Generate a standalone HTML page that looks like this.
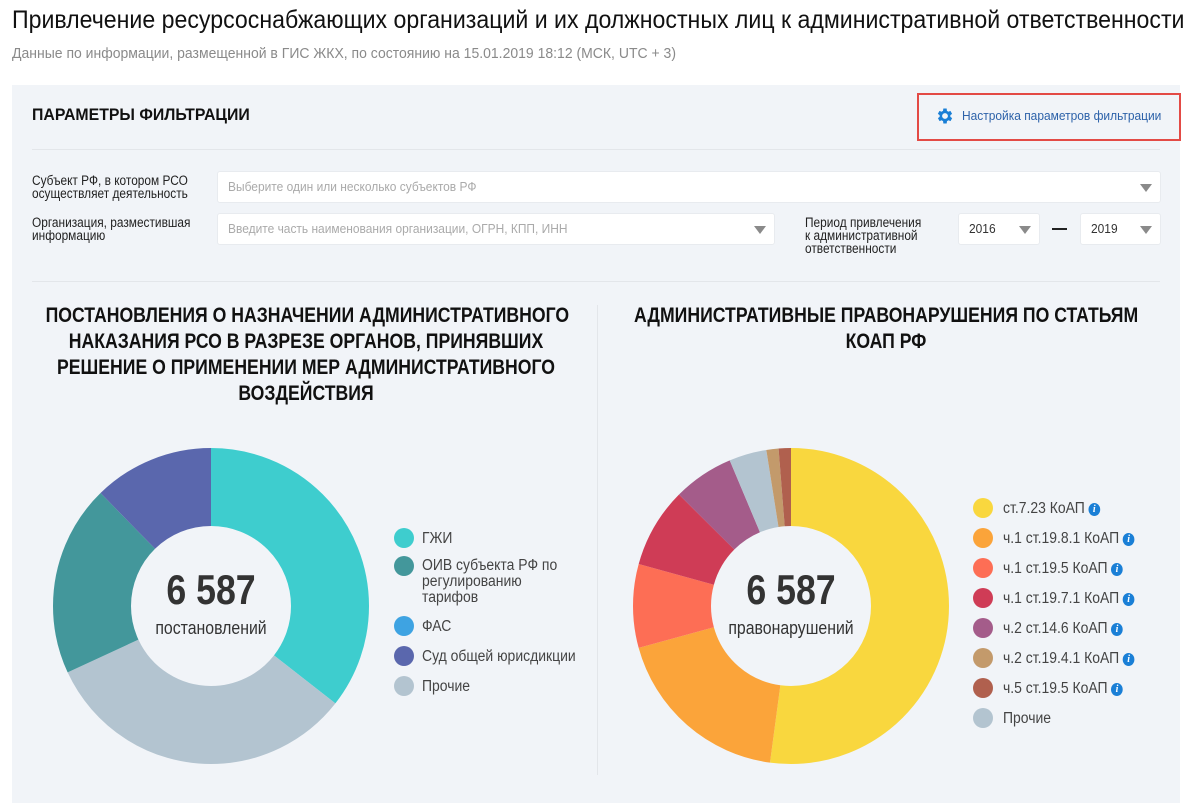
<!DOCTYPE html>
<html><head><meta charset="utf-8"><style>
*{margin:0;padding:0;box-sizing:border-box}
body{width:1189px;height:803px;background:#fff;font-family:"Liberation Sans","Noto Sans CJK SC",sans-serif;color:#222;position:relative;overflow:hidden}
.a{position:absolute;white-space:nowrap;transform-origin:0 0}
.panel{position:absolute;left:12px;top:85px;width:1168px;height:718px;background:#f1f4f8}
.inp{position:absolute;background:#fff;border-radius:3px;border:1px solid #e8ebef;font-size:13px;color:#aaa;padding-left:10px;line-height:30px}
.inp span{display:inline-block;transform:scaleX(.92);transform-origin:0 0}
.arr{position:absolute;right:8px;top:12px;width:0;height:0;border-left:6px solid transparent;border-right:6px solid transparent;border-top:8px solid #8a8a8a}
.lbl{font-size:13.5px;line-height:13px;color:#222;transform:scaleX(.88)}
.h{font-weight:bold;font-size:21px;line-height:26px;text-align:center;color:#111;transform:scaleX(.84);transform-origin:50% 0}
.lg{font-size:15.5px;color:#444;line-height:16px;transform:scaleX(.9)}
.dot{position:absolute;width:20px;height:20px;border-radius:50%}
.i{display:inline-block;width:13px;height:13px;border-radius:50%;background:#1a7fd6;color:#fff;font:italic bold 11px/13px "Liberation Serif",serif;text-align:center;vertical-align:1px;margin-left:4px}
</style></head><body>
<div class="a" style="left:12px;top:6px;font-size:25px;color:#111;transform:scaleX(.925)">Привлечение ресурсоснабжающих организаций и их должностных лиц к административной ответственности</div>
<div class="a" style="left:12px;top:46px;font-size:14.5px;color:#8a8a8a;transform:scaleX(.965)">Данные по информации, размещенной в ГИС ЖКХ, по состоянию на 15.01.2019 18:12 (МСК, UTC + 3)</div>
<div class="panel"></div>
<div class="a" style="left:32px;top:106px;font-size:16.5px;font-weight:bold;color:#111;transform:scaleX(.96)">ПАРАМЕТРЫ ФИЛЬТРАЦИИ</div>
<div class="a" style="left:917px;top:93px;width:264px;height:48px;border:2px solid #e34a45"></div>
<svg class="a" style="left:935px;top:106px" width="20" height="20" viewBox="0 0 24 24"><path fill="#1a7fd6" d="M19.4 13a7.5 7.5 0 000-2l2.1-1.6-2-3.5-2.5 1a7 7 0 00-1.7-1L15 3h-4l-.4 2.9a7 7 0 00-1.7 1l-2.5-1-2 3.5L6.6 11a7.5 7.5 0 000 2l-2.1 1.6 2 3.5 2.5-1a7 7 0 001.7 1L11 21h4l.4-2.9a7 7 0 001.7-1l2.5 1 2-3.5zM13 15.5a3.5 3.5 0 110-7 3.5 3.5 0 010 7z" transform="translate(-1 0)"/></svg>
<div class="a" style="left:962px;top:108px;font-size:13px;color:#2d62a9;transform:scaleX(.92)">Настройка параметров фильтрации</div>
<div class="a" style="left:32px;top:149px;width:1128px;height:1px;background:#e3e6ea"></div>
<div class="a lbl" style="left:32px;top:174px">Субъект РФ, в котором РСО<br>осуществляет деятельность</div>
<div class="inp" style="left:217px;top:171px;width:944px;height:32px"><span>Выберите один или несколько субъектов РФ</span><div class="arr"></div></div>
<div class="a lbl" style="left:32px;top:216px">Организация, разместившая<br>информацию</div>
<div class="inp" style="left:217px;top:213px;width:558px;height:32px"><span>Введите часть наименования организации, ОГРН, КПП, ИНН</span><div class="arr"></div></div>
<div class="a lbl" style="left:805px;top:216px">Период привлечения<br>к административной<br>ответственности</div>
<div class="inp" style="left:958px;top:213px;width:82px;height:32px;color:#333"><span>2016</span><div class="arr"></div></div>
<div class="a" style="left:1052px;top:228px;width:15px;height:1.5px;background:#222"></div>
<div class="inp" style="left:1080px;top:213px;width:81px;height:32px;color:#333"><span>2019</span><div class="arr"></div></div>
<div class="a" style="left:32px;top:281px;width:1128px;height:1px;background:#e3e6ea"></div>
<div class="a" style="left:597px;top:305px;width:1px;height:470px;background:#e3e6ea"></div>
<div class="a h" style="left:-4px;top:303px;width:620px">ПОСТАНОВЛЕНИЯ О НАЗНАЧЕНИИ АДМИНИСТРАТИВНОГО<br>НАКАЗАНИЯ РСО В РАЗРЕЗЕ ОРГАНОВ, ПРИНЯВШИХ<br>РЕШЕНИЕ О ПРИМЕНЕНИИ МЕР АДМИНИСТРАТИВНОГО<br>ВОЗДЕЙСТВИЯ</div>
<div class="a h" style="left:586px;top:303px;width:600px">АДМИНИСТРАТИВНЫЕ ПРАВОНАРУШЕНИЯ ПО СТАТЬЯМ<br>КОАП РФ</div>
<svg class="a" style="left:0;top:0" width="1189" height="803">
<g transform="translate(211 606) rotate(-90)" fill="none" stroke-width="78">
<circle r="119" stroke="#3ecdce" stroke-dasharray="265.9 800" stroke-dashoffset="0"/>
<circle r="119" stroke="#b3c4d0" stroke-dasharray="243 800" stroke-dashoffset="-265.9"/>
<circle r="119" stroke="#43979b" stroke-dasharray="146.4 800" stroke-dashoffset="-508.9"/>
<circle r="119" stroke="#5a67ad" stroke-dasharray="92.4 800" stroke-dashoffset="-655.3"/>
</g>
<g transform="translate(791 606) rotate(-90)" fill="none" stroke-width="78">
<circle r="119" stroke="#f9d73e" stroke-dasharray="389.6 800" stroke-dashoffset="0"/>
<circle r="119" stroke="#fba43a" stroke-dasharray="139 800" stroke-dashoffset="-389.6"/>
<circle r="119" stroke="#fd6e55" stroke-dasharray="64 800" stroke-dashoffset="-528.6"/>
<circle r="119" stroke="#cf3c56" stroke-dasharray="61.1 800" stroke-dashoffset="-592.6"/>
<circle r="119" stroke="#a45c8a" stroke-dasharray="46.3 800" stroke-dashoffset="-653.7"/>
<circle r="119" stroke="#b3c4d0" stroke-dasharray="28.7 800" stroke-dashoffset="-700"/>
<circle r="119" stroke="#c39a6b" stroke-dasharray="9.3 800" stroke-dashoffset="-728.7"/>
<circle r="119" stroke="#b0604e" stroke-dasharray="9.8 800" stroke-dashoffset="-738"/>
</g>
</svg>
<div class="a" style="left:111px;top:566px;width:200px;text-align:center;font-size:42px;font-weight:bold;color:#333;transform:scaleX(.85);transform-origin:50% 0">6 587</div>
<div class="a" style="left:111px;top:618px;width:200px;text-align:center;font-size:18px;color:#333;transform:scaleX(.88);transform-origin:50% 0">постановлений</div>
<div class="a" style="left:691px;top:566px;width:200px;text-align:center;font-size:42px;font-weight:bold;color:#333;transform:scaleX(.85);transform-origin:50% 0">6 587</div>
<div class="a" style="left:691px;top:618px;width:200px;text-align:center;font-size:18px;color:#333;transform:scaleX(.88);transform-origin:50% 0">правонарушений</div>
<div class="dot" style="left:394px;top:528px;background:#3ecdce"></div><div class="a lg" style="left:422px;top:531px">ГЖИ</div>
<div class="dot" style="left:394px;top:556px;background:#43979b"></div><div class="a lg" style="left:422px;top:558px">ОИВ субъекта РФ по<br>регулированию<br>тарифов</div>
<div class="dot" style="left:394px;top:616px;background:#3ea3e2"></div><div class="a lg" style="left:422px;top:619px">ФАС</div>
<div class="dot" style="left:394px;top:646px;background:#5a67ad"></div><div class="a lg" style="left:422px;top:649px">Суд общей юрисдикции</div>
<div class="dot" style="left:394px;top:676px;background:#b3c4d0"></div><div class="a lg" style="left:422px;top:679px">Прочие</div>
<div class="dot" style="left:973px;top:498px;background:#f9d73e"></div><div class="a lg" style="left:1003px;top:501px">ст.7.23 КоАП<span class="i">i</span></div>
<div class="dot" style="left:973px;top:528px;background:#fba43a"></div><div class="a lg" style="left:1003px;top:531px">ч.1 ст.19.8.1 КоАП<span class="i">i</span></div>
<div class="dot" style="left:973px;top:558px;background:#fd6e55"></div><div class="a lg" style="left:1003px;top:561px">ч.1 ст.19.5 КоАП<span class="i">i</span></div>
<div class="dot" style="left:973px;top:588px;background:#cf3c56"></div><div class="a lg" style="left:1003px;top:591px">ч.1 ст.19.7.1 КоАП<span class="i">i</span></div>
<div class="dot" style="left:973px;top:618px;background:#a45c8a"></div><div class="a lg" style="left:1003px;top:621px">ч.2 ст.14.6 КоАП<span class="i">i</span></div>
<div class="dot" style="left:973px;top:648px;background:#c39a6b"></div><div class="a lg" style="left:1003px;top:651px">ч.2 ст.19.4.1 КоАП<span class="i">i</span></div>
<div class="dot" style="left:973px;top:678px;background:#b0604e"></div><div class="a lg" style="left:1003px;top:681px">ч.5 ст.19.5 КоАП<span class="i">i</span></div>
<div class="dot" style="left:973px;top:708px;background:#b3c4d0"></div><div class="a lg" style="left:1003px;top:711px">Прочие</div>
</body></html>
